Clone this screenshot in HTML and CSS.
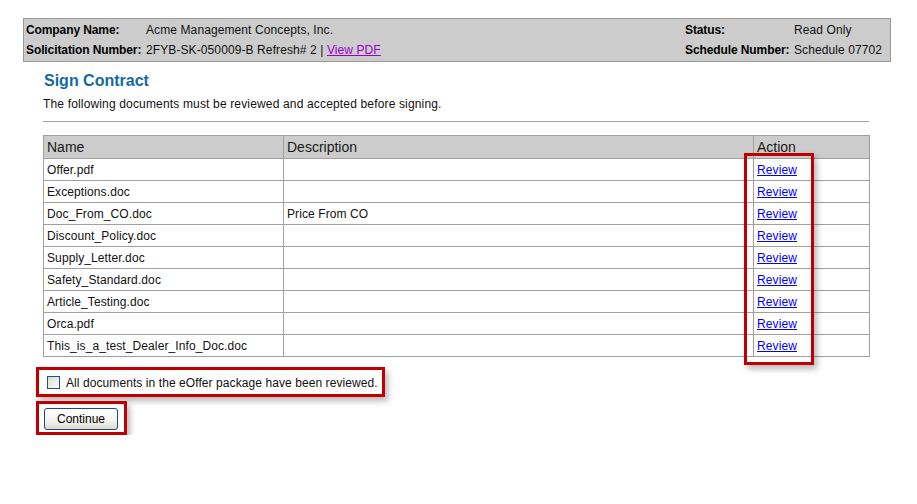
FILE: index.html
```html
<!DOCTYPE html>
<html>
<head>
<meta charset="utf-8">
<title>Sign Contract</title>
<link rel="stylesheet" href="styles.css">
</head>
<body>
<div class="infobar">
  <div class="lbl">Company Name:</div>
  <div class="val">Acme Management Concepts, Inc.</div>
  <div class="lbl">Status:</div>
  <div class="val">Read Only</div>
  <div class="lbl">Solicitation Number:</div>
  <div class="val">2FYB-SK-050009-B Refresh# 2 | <a href="#" class="visited">View PDF</a></div>
  <div class="lbl">Schedule Number:</div>
  <div class="val">Schedule 07702</div>
</div>

<div class="content">
  <h1 class="title">Sign Contract</h1>
  <p class="intro">The following documents must be reviewed and accepted before signing.</p>
  <div class="rule"></div>

  <div class="table-wrap">
    <table class="docs">
      <colgroup>
        <col class="c-name">
        <col class="c-desc">
        <col class="c-act">
      </colgroup>
      <thead>
        <tr><th>Name</th><th>Description</th><th>Action</th></tr>
      </thead>
      <tbody>
        <tr><td>Offer.pdf</td><td></td><td><a href="#">Review</a></td></tr>
        <tr><td>Exceptions.doc</td><td></td><td><a href="#">Review</a></td></tr>
        <tr><td>Doc_From_CO.doc</td><td>Price From CO</td><td><a href="#">Review</a></td></tr>
        <tr><td>Discount_Policy.doc</td><td></td><td><a href="#">Review</a></td></tr>
        <tr><td>Supply_Letter.doc</td><td></td><td><a href="#">Review</a></td></tr>
        <tr><td>Safety_Standard.doc</td><td></td><td><a href="#">Review</a></td></tr>
        <tr><td>Article_Testing.doc</td><td></td><td><a href="#">Review</a></td></tr>
        <tr><td>Orca.pdf</td><td></td><td><a href="#">Review</a></td></tr>
        <tr><td>This_is_a_test_Dealer_Info_Doc.doc</td><td></td><td><a href="#">Review</a></td></tr>
      </tbody>
    </table>
    <div class="highlight review-mark"></div>
  </div>

  <label class="highlight confirm">
    <input type="checkbox" class="check">
    <span>All documents in the eOffer package have been reviewed.</span>
  </label>

  <div class="highlight btn-box">
    <button class="btn" type="button">Continue</button>
  </div>
</div>
</body>
</html>
```

FILE: styles.css
```css
* { box-sizing: border-box; }

body {
  margin: 0;
  background: #ffffff;
  font-family: "Liberation Sans", Arial, sans-serif;
  font-size: 12px;
  color: #111;
}

.infobar {
  margin: 18px 0 0 23px;
  width: 868px;
  height: 44px;
  background: #cccccc;
  border: 1px solid #999999;
  display: grid;
  grid-template-columns: 120px 539px 109px 1fr;
  grid-auto-rows: 20px;
  align-items: center;
  padding: 1px 0 0 2px;
}

.infobar .lbl {
  font-weight: bold;
  color: #000;
  letter-spacing: -0.1px;
}

.infobar .val {
  color: #111;
  letter-spacing: 0.1px;
}

.infobar a.visited { color: #9900cc; }

.content {
  margin-left: 43px;
  width: 826px;
}

.title {
  margin: 9px 0 0 1px;
  font-size: 16px;
  line-height: 20px;
  font-weight: bold;
  color: #156a9f;
}

.intro {
  margin: 6px 0 0 0;
  line-height: 14px;
  letter-spacing: 0.16px;
}

.rule {
  margin-top: 10px;
  border-top: 1px solid #a0a0a0;
}

.table-wrap {
  position: relative;
  margin-top: 13px;
}

.docs {
  width: 826px;
  border-collapse: collapse;
  table-layout: fixed;
}

.c-name { width: 240px; }
.c-desc { width: 470px; }
.c-act { width: 116px; }

.docs th,
.docs td {
  border: 1px solid #a0a0a0;
  height: 22px;
  padding: 0 3px;
  text-align: left;
  white-space: nowrap;
  letter-spacing: 0.1px;
}

.docs th {
  height: 23px;
  background: #cccccc;
  font-size: 14px;
  font-weight: normal;
  color: #1a1a1a;
  letter-spacing: 0;
}

.docs td a {
  color: #0000ff;
  text-decoration: underline;
}

.highlight {
  border: 3px solid #c00000;
  box-shadow: 3px 4px 6px rgba(0, 0, 0, 0.28);
}

.review-mark {
  position: absolute;
  left: 701px;
  top: 18px;
  width: 70px;
  height: 212px;
}

.confirm {
  margin: 10px 0 0 -7px;
  width: 349px;
  height: 30px;
  display: flex;
  align-items: center;
  gap: 6px;
  padding: 1px 0 0 8px;
  cursor: pointer;
  letter-spacing: 0.08px;
}

.check {
  appearance: none;
  -webkit-appearance: none;
  margin: 0;
  width: 13px;
  height: 13px;
  border: 1px solid #1c5180;
  background: linear-gradient(135deg, #dcdcd5 0%, #fbfbfa 100%);
}

.btn-box {
  margin: 4px 0 0 -7px;
  width: 91px;
  height: 34px;
  padding: 4px 5px 0 5px;
}

.btn {
  width: 74px;
  height: 22px;
  margin: 0;
  padding: 0;
  font-family: "Liberation Sans", Arial, sans-serif;
  font-size: 12px;
  color: #000;
  border: 1px solid #1f4a78;
  border-radius: 3px;
  background: linear-gradient(#ffffff 0%, #f4f3ee 60%, #dcd9cc 100%);
}
```
